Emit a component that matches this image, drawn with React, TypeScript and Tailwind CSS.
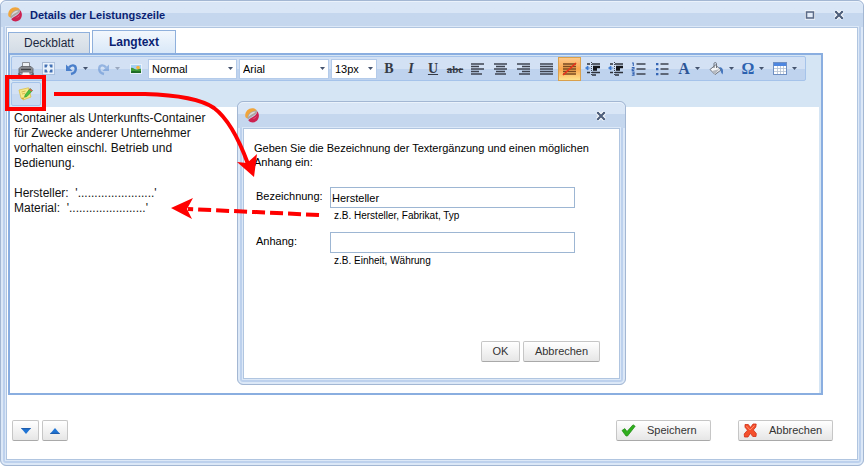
import { useState } from 'react';
import type { ReactNode } from 'react';

const DARK = '#3f4450';

function LogoIcon() {
  return (
    <svg width="14" height="15" viewBox="0 0 14 15" className="shrink-0">
      <path d="M0.3 8.5C-0.4 4 3 0.2 7.2 0.2C9.2 0.2 10.8 1 11.8 2.2L3 10.5C1.4 10.2 0.5 9.6 0.3 8.5Z" fill="#f0a53c" />
      <path d="M2.6 10.5C2 6.5 5.5 2.6 12 2.6C13 4.6 10 6.8 7.5 8.2C5.6 9.2 4.2 10 3.2 11.6Z" fill="#aaa5a2" />
      <path d="M3.4 9C3.8 6 6.5 3.8 10.6 3.5C9.5 5.6 5.8 6.2 3.4 9Z" fill="#dddad8" />
      <path d="M12.3 3.2C14.8 6.2 14.3 11 11.2 13.3C8.6 15.2 5 14.6 3.3 12.2C4.4 10.6 5.8 10 7.8 8.9C10.4 7.5 12 5.8 12.3 3.2Z" fill="#cc2150" />
      <path d="M11.8 7.5C11.6 9.6 9.8 11 7.4 10.8C9.2 10 10.8 9 11.8 7.5Z" fill="#e4567f" />
    </svg>
  );
}

function CloseIcon() {
  return (
    <svg width="12" height="12" viewBox="0 0 12 12">
      <path d="M2.5 2.5L9.5 9.5M9.5 2.5L2.5 9.5" stroke="#fff" strokeWidth="4" />
      <path d="M2.5 2.5L9.5 9.5M9.5 2.5L2.5 9.5" stroke="#4f607c" strokeWidth="2.2" />
      <path d="M2 2.5H4M8 2.5H10M2 9.5H4M8 9.5H10" stroke="#4f607c" />
    </svg>
  );
}

function MaximizeIcon() {
  return (
    <svg width="10" height="10" viewBox="0 0 10 10">
      <rect x="1.5" y="2" width="7" height="6" fill="#e3ecf8" stroke="#fff" strokeWidth="3" />
      <rect x="1.5" y="2" width="7" height="6" fill="#e3ecf8" stroke="#5b6b88" strokeWidth="1.6" />
    </svg>
  );
}

function PrinterIcon() {
  return (
    <svg width="16" height="16" viewBox="0 0 16 16">
      <path d="M4.5 1.5H11.5V7H4.5Z" fill="#eef1f5" stroke="#8b8f97" />
      <path d="M1 7.5L3 5.5H13L15 7.5V12H1Z" fill="#8b8d92" stroke="#5c5e64" strokeWidth="0.8" />
      <path d="M3 8.5H13" stroke="#3d3f45" strokeWidth="1.4" />
      <path d="M4.5 11H11.5L12.5 14.5H3.5Z" fill="#f5f6f8" stroke="#74767c" strokeWidth="0.8" />
      <path d="M1 12V14H3M15 12V14H13" stroke="#55575d" strokeWidth="1.5" fill="none" />
    </svg>
  );
}

function FullscreenIcon() {
  return (
    <svg width="13" height="13" viewBox="0 0 13 13">
      <path d="M0.5 0.5H12.5V12.5H0.5Z" fill="#eaf2fc" stroke="#7f9cc6" strokeDasharray="1 1" />
      <path d="M2.5 2.5H5.5V3.5L4.5 5.5H2.5ZM10.5 2.5V5.5H8.5L7.5 3.5V2.5ZM2.5 10.5V7.5H4.5L5.5 9.5V10.5ZM10.5 10.5H7.5V9.5L8.5 7.5H10.5Z" fill="#4270b4" />
    </svg>
  );
}

function UndoIcon({ flip = false }: { flip?: boolean }) {
  return (
    <svg width="13" height="14" viewBox="0 0 13 14" className={flip ? '-scale-x-100 opacity-45' : ''}>
      <path d="M4 5.5C6 2.5 10.8 2.5 10.8 6.8C10.8 9.5 8.5 11.5 6 12" fill="none" stroke="#4a7fcb" strokeWidth="2.4" />
      <path d="M1 2.5V9H7.5Z" fill="#4a7fcb" />
    </svg>
  );
}

function ImageIcon() {
  return (
    <svg width="14" height="14" viewBox="0 0 14 14">
      <rect x="1.5" y="2.5" width="11" height="9" fill="#a6d0f5" stroke="#e8f1fb" />
      <path d="M2 6C4 5 6 8 8 7.5C10 7 11 6.5 12 7V11H2Z" fill="#3e9a36" />
      <path d="M2 9.5C5 8 9 10 12 9V11H2Z" fill="#1d6a27" />
      <circle cx="9" cy="5.5" r="1.8" fill="#f9b43c" />
    </svg>
  );
}

function NoteIcon() {
  return (
    <svg width="16" height="16" viewBox="0 0 16 16">
      <path d="M1 4L10.5 1.8L13 11L5.5 13.8L3 12Z" fill="#f7e98a" stroke="#dcc04a" strokeWidth="0.8" />
      <path d="M3 12L5.5 13.8L6 11.5Z" fill="#c9a52c" />
      <path d="M3.5 6L7.5 5M4 8L7 7.3" stroke="#cdb03f" strokeWidth="0.8" />
      <path d="M12 2.5L14.5 4.5L9 10.5L6.5 11.3L7.2 8.8Z" fill="#4fc13f" stroke="#2f9428" strokeWidth="0.6" />
      <path d="M12 2.5L14.5 4.5L13.5 5.5L11 3.5Z" fill="#e2574c" />
    </svg>
  );
}

type Align = 'left' | 'center' | 'right' | 'full';

const ALIGN_LINES: Record<Align, string> = {
  left: 'M1 2H14M1 4.5H9M1 7H14M1 9.5H9M1 12H12',
  center: 'M1 2H14M3 4.5H12M1 7H14M3 9.5H12M2 12H13',
  right: 'M1 2H14M6 4.5H14M1 7H14M6 9.5H14M3 12H14',
  full: 'M1 2H14M1 4.5H14M1 7H14M1 9.5H14M1 12H14',
};

function AlignIcon({ align, off = false }: { align: Align; off?: boolean }) {
  return (
    <svg width="15" height="14" viewBox="0 0 15 14">
      <path d={ALIGN_LINES[align]} stroke={off ? '#7a4a20' : DARK} strokeWidth="1.7" />
      {off && <path d="M1 13L14 1" stroke="#e8321c" strokeWidth="1.7" />}
    </svg>
  );
}

function IndentIcon({ outdent = false }: { outdent?: boolean }) {
  return (
    <svg width="16" height="14" viewBox="0 0 16 14">
      <path d="M2 2H5M7 2H15M2 10.5H5M7 10.5H15M7 13H11" stroke="#2e323b" strokeWidth="1.4" />
      <path d="M8 5H15M8 7.5H12" stroke="#16181d" strokeWidth="2.4" />
      <path d="M6.5 0V14" stroke={DARK} strokeDasharray="1 1" />
      <path d={outdent ? 'M0.5 6L3 4V8ZM3 6H5.5' : 'M5 6L2.5 4V8ZM0 6H3'} fill="#3a78d0" stroke="#3a78d0" strokeWidth="0.8" />
    </svg>
  );
}

function NumberListIcon() {
  return (
    <svg width="15" height="14" viewBox="0 0 15 14">
      <path d="M5.5 2H14.5M5.5 7H14.5M5.5 12H14.5" stroke={DARK} strokeWidth="1.6" />
      <path d="M1 1H2.3V4M0.8 5.5H3V7H1.2V8.5H3.2M0.8 10H3V13.3H0.8M1.4 11.6H3" fill="none" stroke="#3565b5" strokeWidth="1.1" />
    </svg>
  );
}

function BulletListIcon() {
  return (
    <svg width="14" height="14" viewBox="0 0 14 14">
      <path d="M5.5 2H13.5M5.5 7H13.5M5.5 12H13.5" stroke={DARK} strokeWidth="1.6" />
      <path d="M1 1H3.4V3.2H1ZM1 6H3.4V8.2H1ZM1 11H3.4V13.2H1Z" fill="#3565b5" />
    </svg>
  );
}

function BucketIcon() {
  return (
    <svg width="15" height="14" viewBox="0 0 15 14">
      <path d="M6.5 3L12 8L6 12.5L1 7.5Z" fill="#f4f5f7" stroke="#6f747d" />
      <path d="M3 9L10.5 7L6 12Z" fill="#b5b9c0" />
      <path d="M5 6V1.5C5 0.3 7.5 0.3 7.5 1.5V6" fill="none" stroke="#6f747d" />
      <path d="M10 5C13.5 5 15 8 13.5 12.5C12 11 11.5 9 11.5 7.5Z" fill="#4576bd" />
    </svg>
  );
}

function TableIcon() {
  return (
    <svg width="14" height="13" viewBox="0 0 14 13">
      <rect x="0.5" y="0.5" width="13" height="12" fill="#fff" stroke="#6f8fc2" />
      <rect x="1" y="1" width="12" height="3" fill="#4d86e0" />
      <path d="M1 6.5H13M1 9.5H13M4.5 4V12M7.5 4V12M10.5 4V12" stroke="#b3c0d2" strokeWidth="0.8" />
    </svg>
  );
}

function CaretIcon({ faded = false }: { faded?: boolean }) {
  return (
    <svg width="5" height="3" viewBox="0 0 5 3" className={faded ? 'opacity-40' : ''}>
      <path d="M0 0H5L2.5 3Z" fill="#44536e" />
    </svg>
  );
}

function ArrowIcon({ up = false }: { up?: boolean }) {
  return (
    <svg width="10" height="6" viewBox="0 0 10 6" className={up ? 'rotate-180' : 'mt-px'}>
      <path d="M0 0H10L5 6Z" fill="#1f74d4" />
      <path d="M0 0H10L9 1.3H1Z" fill="#1d5dae" />
    </svg>
  );
}

function CheckIcon() {
  return (
    <svg width="15" height="13" viewBox="0 0 15 13">
      <path d="M1 6.5L3.8 4.6L6 7.5L12 0.8L14.2 2.2L6.5 12H5Z" fill="#2fae1d" stroke="#1f8a14" strokeWidth="0.7" />
    </svg>
  );
}

function CrossIcon() {
  return (
    <svg width="15" height="15" viewBox="0 0 15 15">
      <path d="M2 1.5H5.3L7.5 4.5L10 1H13.2L12.8 4L10.3 7L13.3 10.5L13 13.5H9.8L7.3 10.3L5 14H1.5L1.2 11L4.5 7.2L2 4.2Z" fill="#f4502c" stroke="#cf2d16" strokeWidth="0.8" />
      <path d="M3.4 3L7 7L11.5 2.5" fill="none" stroke="#ff9273" strokeWidth="0.9" />
    </svg>
  );
}

interface ToolButtonProps {
  label: string;
  children: ReactNode;
  width?: string;
  active?: boolean;
  menu?: boolean;
  disabled?: boolean;
}

function ToolButton({ label, children, width = 'w-[23px]', active, menu, disabled }: ToolButtonProps) {
  return (
    <button
      type="button"
      aria-label={label}
      disabled={disabled}
      className={`flex h-6 shrink-0 items-center justify-center gap-[5px] ${menu ? 'w-8' : width} ${
        active ? 'border border-[#d9a04c] bg-linear-to-b from-[#fdc98a] via-[#f9a54b] to-[#fde28c]' : ''
      }`}
    >
      {children}
      {menu && <CaretIcon faded={disabled} />}
    </button>
  );
}

function TextToolButton({ label, text, className }: { label: string; text: string; className: string }) {
  return (
    <ToolButton label={label} width="w-[22px]">
      <span className={`font-['Liberation_Serif',serif] font-bold leading-4 text-[#363b46] ${className}`}>{text}</span>
    </ToolButton>
  );
}

function ToolSelect({ label, value, width }: { label: string; value: string; width: string }) {
  return (
    <span className={`relative h-5 shrink-0 ${width}`}>
      <select
        aria-label={label}
        defaultValue={value}
        className="block h-full w-full appearance-none border border-[#b4cbea] bg-white pl-[3px] text-[11px] leading-4 text-black outline-none"
      >
        <option>{value}</option>
      </select>
      <span className="pointer-events-none absolute inset-y-0 right-1 flex items-center">
        <CaretIcon />
      </span>
    </span>
  );
}

function Toolbar() {
  return (
    <div className="flex h-[25px] items-center self-start rounded-xs border border-[#a5c3ea] bg-linear-to-b from-[#d3e1f4] from-50% to-[#bfd3ee] to-50% pl-0.5 pr-1">
      <ToolButton label="Drucken"><PrinterIcon /></ToolButton>
      <ToolButton label="Vollbild"><FullscreenIcon /></ToolButton>
      <ToolButton label="Rückgängig" menu><UndoIcon /></ToolButton>
      <ToolButton label="Wiederholen" menu disabled><UndoIcon flip /></ToolButton>
      <ToolButton label="Bild"><ImageIcon /></ToolButton>
      <div className="flex gap-0.5 px-px">
        <ToolSelect label="Absatzformat" value="Normal" width="w-[89px]" />
        <ToolSelect label="Schriftart" value="Arial" width="w-[90px]" />
        <ToolSelect label="Schriftgröße" value="13px" width="w-[46px]" />
      </div>
      <TextToolButton label="Fett" text="B" className="text-sm" />
      <TextToolButton label="Kursiv" text="I" className="text-sm italic" />
      <TextToolButton label="Unterstrichen" text="U" className="text-sm underline" />
      <TextToolButton label="Durchgestrichen" text="abc" className="text-[11px] line-through" />
      <ToolButton label="Linksbündig"><AlignIcon align="left" /></ToolButton>
      <ToolButton label="Zentriert"><AlignIcon align="center" /></ToolButton>
      <ToolButton label="Rechtsbündig"><AlignIcon align="right" /></ToolButton>
      <ToolButton label="Blocksatz"><AlignIcon align="full" /></ToolButton>
      <ToolButton label="Keine Ausrichtung" active><AlignIcon align="full" off /></ToolButton>
      <ToolButton label="Einzug vergrößern"><IndentIcon outdent /></ToolButton>
      <ToolButton label="Einzug verkleinern"><IndentIcon outdent /></ToolButton>
      <ToolButton label="Nummerierung"><NumberListIcon /></ToolButton>
      <ToolButton label="Aufzählung"><BulletListIcon /></ToolButton>
      <ToolButton label="Textfarbe" menu>
        <span className="font-['Liberation_Serif',serif] text-base font-bold text-[#2d5596]">A</span>
      </ToolButton>
      <ToolButton label="Hintergrundfarbe" menu><BucketIcon /></ToolButton>
      <ToolButton label="Sonderzeichen" menu>
        <span className="font-['Liberation_Serif',serif] text-base font-bold text-[#2d62b0]">Ω</span>
      </ToolButton>
      <ToolButton label="Tabelle" menu><TableIcon /></ToolButton>
    </div>
  );
}

interface WindowProps {
  title?: string;
  maximizable?: boolean;
  className: string;
  children: ReactNode;
}

function Window({ title, maximizable, className, children }: WindowProps) {
  return (
    <section
      className={`flex flex-col rounded-md border border-[#a3b7d3] bg-[#bdd1ed] px-[5px] pb-[5px] shadow-[inset_0_0_0_2px_#dce8f7] ${className}`}
    >
      <header className="-mx-[5px] flex h-[26px] shrink-0 items-center gap-2 rounded-t-md border-t border-[#eaf2fb] bg-linear-to-b from-[#d9e6f6] from-45% to-[#c5d7ee] to-45% pl-[7px] pr-[18px]">
        <LogoIcon />
        <h1 className="flex-1 text-[11px] font-bold leading-4 text-[#0a1f73]">{title}</h1>
        {maximizable && (
          <button type="button" aria-label="Maximieren" className="mr-2.5">
            <MaximizeIcon />
          </button>
        )}
        <button type="button" aria-label="Schließen">
          <CloseIcon />
        </button>
      </header>
      <div className="flex flex-1 flex-col border border-[#b0c5e0] bg-white shadow-[0_0_0_1px_#dce8f7]">{children}</div>
    </section>
  );
}

function PushButton({ className, label, children }: { className: string; label?: string; children: ReactNode }) {
  return (
    <button
      type="button"
      aria-label={label}
      className={`flex h-[21px] items-center rounded-xs border border-[#c6c6c6] border-b-[#a9a9a9] bg-linear-to-b from-white to-[#e6e6e6] text-[11px] text-[#333] ${className}`}
    >
      {children}
    </button>
  );
}

function Field({ id, label, value, hint }: { id: string; label: string; value: string; hint: string }) {
  const [text, setText] = useState(value);
  return (
    <div className="flex h-[45px] gap-1.5 pl-0.5">
      <label htmlFor={id} className="w-[68px] shrink-0 pt-px text-[11px] leading-4">
        {label}
      </label>
      <div className="w-[245px]">
        <input
          id={id}
          value={text}
          onChange={(e) => setText(e.target.value)}
          className="block h-[21px] w-full border border-[#9db6d3] bg-white px-px text-[11px] text-black outline-none"
        />
        <p className="pl-1 text-[10px] leading-[15px]">{hint}</p>
      </div>
    </div>
  );
}

function SupplementDialog() {
  return (
    <Window className="absolute left-[237px] top-[101px] h-[284px] w-[389px]">
      <div className="flex flex-1 flex-col pb-4 pl-2.5 pr-[19px] pt-3 text-black">
        <p className="mb-[18px] text-[11px] leading-[14px]">
          Geben Sie die Bezeichnung der Textergänzung und einen möglichen
          <br />
          Anhang ein:
        </p>
        <Field id="bezeichnung" label="Bezeichnung:" value="Hersteller" hint="z.B. Hersteller, Fabrikat, Typ" />
        <Field id="anhang" label="Anhang:" value="" hint="z.B. Einheit, Währung" />
        <div className="mt-auto flex justify-end gap-[3px]">
          <PushButton className="w-[39px] justify-center">OK</PushButton>
          <PushButton className="w-[77px] justify-center">Abbrechen</PushButton>
        </div>
      </div>
    </Window>
  );
}

function Annotations() {
  return (
    <svg width="330" height="230" viewBox="0 0 330 230" className="pointer-events-none absolute left-0 top-0">
      <rect x="7" y="77" width="37" height="32" fill="none" stroke="#f00" strokeWidth="4" />
      <path d="M54 94H145C180 95 201 99 214 108C230 120 240 142 248 164" fill="none" stroke="#f00" strokeWidth="4" />
      <path d="M254 177L237 162L247 163L257 154Z" fill="#f00" />
      <path d="M319 215L188 209" fill="none" stroke="#f00" strokeWidth="4" strokeDasharray="13 5" />
      <path d="M171 208L193 198L187 209L192 219Z" fill="#f00" />
    </svg>
  );
}

export default function App() {
  return (
    <main className="relative flex min-h-screen flex-col bg-white font-['Liberation_Sans',Arial,sans-serif]">
      <Window title="Details der Leistungszeile" maximizable className="flex-1">
        <div className="flex flex-1 flex-col pl-px pt-0.5">
          <div className="flex items-end gap-0.5" role="tablist">
            <button type="button" role="tab" className="h-[21px] w-[82px] border border-b-0 border-[#8fb0dc] bg-linear-to-b from-[#e4e9ee] to-[#d3dce6] text-xs text-[#1c2940]">
              Deckblatt
            </button>
            <button type="button" role="tab" aria-selected className="h-[23px] w-[84px] border border-b-0 border-[#8fb0dc] bg-linear-to-b from-[#f2f7fd] to-[#d9e8f8] text-xs font-bold text-[#0a1f73]">
              Langtext
            </button>
          </div>

          <div className="mr-[34px] flex flex-1 flex-col border-2 border-[#8aaee0] bg-[#d5e5f4] pr-0.5">
            <div className="flex flex-col pl-px pt-px">
              <Toolbar />
              <div className="flex h-[26px] items-center">
                <button
                  type="button"
                  aria-label="Textergänzung einfügen"
                  className="flex h-6 w-[30px] items-center justify-center rounded-xs border border-[#a5c3ea] bg-linear-to-b from-[#d3e1f4] from-50% to-[#c8daf1] to-50%"
                >
                  <NoteIcon />
                </button>
              </div>
            </div>
            <div className="flex-1 bg-white px-1 pt-1 text-xs leading-[15px] text-[#111]">
              <p>
                Container als Unterkunfts-Container
                <br />
                für Zwecke anderer Unternehmer
                <br />
                vorhalten einschl. Betrieb und
                <br />
                Bedienung.
              </p>
              <p className="mt-[15px]">Hersteller:&nbsp; '.......................'</p>
              <p>Material:&nbsp; '.......................'</p>
            </div>
          </div>

          <footer className="flex h-16 shrink-0 items-center gap-[3px] pb-px pl-1 pr-6 pt-2">
            <PushButton label="Nächste Zeile" className="w-[27px] justify-center"><ArrowIcon /></PushButton>
            <PushButton label="Vorherige Zeile" className="w-[26px] justify-center"><ArrowIcon up /></PushButton>
            <PushButton className="ml-auto w-[95px] gap-[11px] pl-1"><CheckIcon />Speichern</PushButton>
            <PushButton className="ml-6 w-[95px] gap-[11px] pl-1"><CrossIcon />Abbrechen</PushButton>
          </footer>
        </div>
      </Window>

      <SupplementDialog />
      <Annotations />
    </main>
  );
}
